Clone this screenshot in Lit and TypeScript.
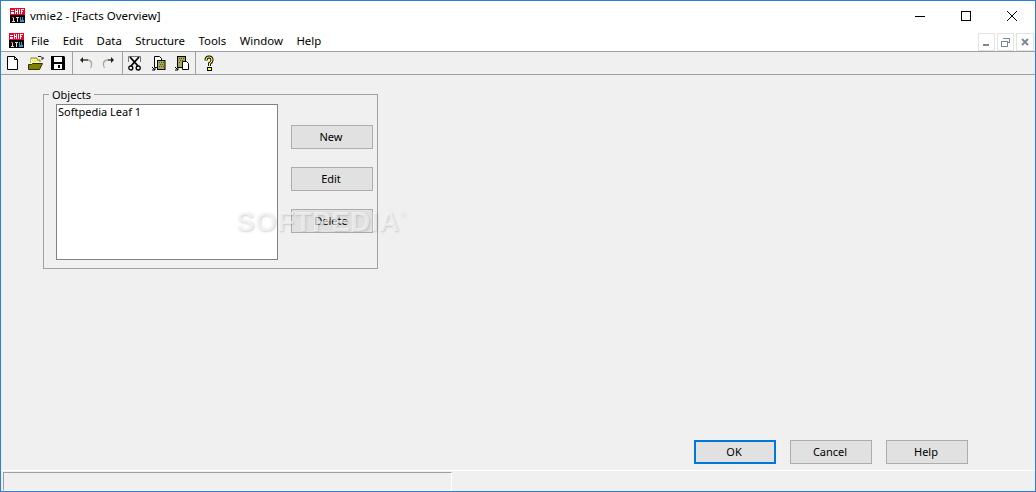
import { LitElement, html, css, svg } from "lit";
import { customElement } from "lit/decorators.js";

const appIcon = html`<svg class="appicon" width="15" height="15" viewBox="0 0 15 15" shape-rendering="crispEdges">
  <rect x="0" y="0" width="15" height="7" fill="#ee0028"/>
  <path d="M1 2h3v1H1zM1 4h3v2H1zM5 1h1v5H5zM7 1h1v5H7zM6 3h1v1H6zM9 1h1v5H9zM11 1h3v1h-3zM11 1h1v5h-1zM11 3h2v1h-2z" fill="#fff"/>
  <rect x="0" y="7" width="15" height="8" fill="#000"/>
  <path d="M2 13h1v-3h1v3h1v1H2zM6 9h3v1H8v4H7v-4H6z" fill="#ddd"/>
  <path d="M10 9h1v3h1V9h1v3h1v2h-4z" fill="#39c"/>
  <path d="M2 9h2v1H2z" fill="#e44"/>
</svg>`;

const icons = {
  doc: svg`<path d="M1.500 .5h7l3 3v10h-10z" fill="#fff" stroke="#000"/><path d="M8.500 .5v3h3" fill="none" stroke="#000"/>`,
  open: svg`<path d="M3 7V2h6v2h3v2" fill="#ffff80" stroke="#808000"/><path d="M3 3h6v4H3z" fill="#ffff90"/><path d="M4 4h1v1H4zM6 4h1v1H6zM8 4h1v1H8zM5 5h1v1H5zM7 5h1v1H7z" fill="#d8d8a0"/><path d="M.5 13.500v-5h3l1-1h10l-3 6z" fill="#808000" stroke="#303000"/><path d="M10 .5h3l2 2M15 1v2h-2" fill="none" stroke="#222"/>`,
  save: svg`<path d="M0 0h13l1 1v13H0z" fill="#000"/><rect x="3" y="1" width="8" height="5" fill="#fff"/><rect x="3" y="8" width="8" height="5" fill="#fff"/><rect x="7" y="9" width="2" height="3" fill="#000"/>`,
  undo: svg`<path d="M3 4h6q3 .5 3.500 3t-1 5" fill="none" stroke="#a8a890" stroke-width="1.300"/><path d="M4 1v6L1 4z" fill="#222"/><path d="M9 4H4" stroke="#222"/>`,
  redo: svg`<path d="M10 4H5Q2 4.500 1.500 7t1 5" fill="none" stroke="#a8a890" stroke-width="1.300"/><path d="M9 1v6l3-3z" fill="#222"/><path d="M9 4H6" stroke="#222"/>`,
  cut: svg`<path d="M.5 6V.5h12V6" fill="#f4f4f4" stroke="#777"/><path d="M2 1l8 9M11 1L3 10" stroke="#000" stroke-width="1.800" fill="none"/><circle cx="2.800" cy="12" r="2" fill="none" stroke="#000" stroke-width="1.300"/><circle cx="10.200" cy="12" r="2" fill="none" stroke="#000" stroke-width="1.300"/>`,
  copy: svg`<path d="M2.500 .5h5l2 2v2h-4v7h-3z" fill="#fff" stroke="#000"/><rect x="5.500" y="4.500" width="7.500" height="9" fill="#a8a850" stroke="#000"/><path d="M7 6h1v1H7zM9 6h1v1H9zM11 6h1v1h-1zM8 8h1v1H8zM10 8h1v1h-1zM7 10h1v1H7zM9 10h1v1H9zM11 10h1v1h-1z" fill="#5a5a20"/><path d="M0 11l3 3M0 14h3v-2" fill="none" stroke="#000"/>`,
  paste: svg`<rect x="2.500" y=".5" width="8" height="11" fill="#a8a850" stroke="#000"/><path d="M4 2h1v1H4zM6 2h1v1H6zM8 2h1v1H8zM5 4h1v1H5zM7 4h1v1H7zM4 6h1v1H4z" fill="#5a5a20"/><path d="M7.500 5.500h4l2 2v6h-6z" fill="#fff" stroke="#000"/><path d="M0 11l3 3M0 14h3v-2" fill="none" stroke="#000"/>`,
  help: svg`<path d="M2 4.500Q2 1 5 1T8 4q0 2-2.500 3.500V10" fill="none" stroke="#000" stroke-width="3"/><path d="M2 4.500Q2 1 5 1T8 4q0 2-2.500 3.500V10" fill="none" stroke="#ffff40" stroke-width="1.200"/><rect x="3.500" y="11.500" width="4" height="3" fill="#ffff40" stroke="#000"/>`,
};

const tb = (name: keyof typeof icons, w: number) =>
  html`<svg class="tbicon" width=${w} height="15" viewBox="0 0 ${w} 15">${icons[name]}</svg>`;

@customElement("app-root")
export class AppRoot extends LitElement {
  static styles = css`
    :host {
      display: flex;
      flex-direction: column;
      box-sizing: border-box;
      width: 1036px;
      height: 492px;
      position: relative;
      overflow: hidden;
      background: #f0f0f0;
      border: 1px solid #2b80d6;
      font-family: "Noto Sans", sans-serif;
      font-size: 11px;
      color: #000;
    }
    .title {
      height: 29px;
      flex: none;
      background: #fff;
      display: flex;
      align-items: center;
      padding-left: 9px;
      gap: 5px;
      font-size: 11.500px;
    }
    .title .name { margin-top: -1px; }
    .caption { margin-left: auto; display: flex; }
    .cap {
      width: 46px;
      height: 29px;
      display: flex;
      align-items: center;
      justify-content: center;
    }
    .menubar {
      height: 21px;
      flex: none;
      background: #fff;
      display: flex;
      align-items: center;
      padding-left: 8px;
    }
    .menus { display: flex; gap: 13.500px; margin-left: 7px; font-size: 11.400px; }
    .mdi { margin-left: auto; margin-right: 1px; display: flex; gap: 2px; align-self: flex-end; }
    .mdibtn {
      width: 17px;
      height: 18px;
      box-sizing: border-box;
      border: 1px solid #e3e3e3;
      display: flex;
      align-items: center;
      justify-content: center;
    }
    .mdibtn.last { width: 18px; }
    .toolbar {
      height: 22px;
      flex: none;
      display: flex;
      align-items: center;
      padding-left: 5px;
      border-top: 1px solid #a0a0a0;
      border-bottom: 1px solid #a0a0a0;
      box-sizing: content-box;
    }
    .tbicon { flex: none; display: block; overflow: visible; }
    .sep { width: 1px; height: 22px; background: #a0a0a0; flex: none; }
    .content { flex: 1; display: flex; flex-direction: column; min-height: 0; }
    fieldset {
      box-sizing: border-box;
      width: 335px;
      height: 182px;
      margin: 12px 0 0 42px;
      padding: 3px 4px 0 12px;
      border: 1px solid #a0a0a0;
      display: flex;
      gap: 13px;
      min-inline-size: 0;
    }
    legend {
      padding: 0 3px;
      margin-left: -7px;
      height: 14px;
      line-height: 16px;
    }
    .list {
      box-sizing: border-box;
      width: 222px;
      height: 156px;
      background: #fff;
      border: 1px solid #828282;
      padding: 0 1px;
      line-height: 14px;
    }
    .side { display: flex; flex-direction: column; gap: 18px; padding-top: 21px; }
    button {
      box-sizing: border-box;
      width: 82px;
      height: 24px;
      padding: 0 2px 2px 0;
      background: #e1e1e1;
      border: 1px solid #adadad;
      font: inherit;
      color: #000;
    }
    button.def { border: 2px solid #0078d7; }
    .actions {
      margin-top: auto;
      margin-bottom: 6px;
      display: flex;
      gap: 14px;
      justify-content: flex-end;
      padding-right: 67px;
    }
    .status {
      height: 21px;
      flex: none;
      box-sizing: border-box;
      border-top: 1px solid #fff;
      padding: 1px 0 0 2px;
    }
    .panel {
      box-sizing: border-box;
      width: 449px;
      height: 19px;
      border-style: solid;
      border-width: 1px;
      border-color: #a0a0a0 #fff #fff #a0a0a0;
    }
    .wm {
      position: absolute;
      left: 235px;
      top: 204px;
      font-family: "Liberation Sans", sans-serif;
      font-weight: 700;
      font-size: 27.500px;
      line-height: 34px;
      letter-spacing: 0.7px;
      color: rgba(255, 255, 255, 0.6);
      text-shadow: 1px 1px 2px rgba(120, 120, 120, 0.3);
      pointer-events: none;
    }
    .wm sup { font-size: 8px; font-weight: 400; vertical-align: 14px; line-height: 0; }
    .g5 { width: 5px; flex: none; } .g6 { width: 6px; flex: none; }
    .g7 { width: 7px; flex: none; } .g8 { width: 8px; flex: none; }
    .g9 { width: 9px; flex: none; } .g10 { width: 10px; flex: none; }
    .g11 { width: 11px; flex: none; }
  `;

  render() {
    return html`
      <div class="title">
        ${appIcon}
        <span class="name">vmie2 - [Facts Overview]</span>
        <div class="caption">
          <div class="cap"><svg width="10" height="10" viewBox="0 0 10 10"><path d="M0 5.500h10" stroke="#000" fill="none"/></svg></div>
          <div class="cap"><svg width="10" height="10" viewBox="0 0 10 10"><rect x=".5" y=".5" width="9" height="9" stroke="#000" fill="none"/></svg></div>
          <div class="cap"><svg width="10" height="10" viewBox="0 0 10 10"><path d="M0 0l10 10M10 0L0 10" stroke="#000" fill="none"/></svg></div>
        </div>
      </div>
      <div class="menubar">
        ${appIcon}
        <div class="menus">
          <span>File</span><span>Edit</span><span>Data</span><span>Structure</span><span>Tools</span><span>Window</span><span>Help</span>
        </div>
        <div class="mdi">
          <div class="mdibtn"><svg width="7" height="7" viewBox="0 0 7 7" shape-rendering="crispEdges"><rect x="0" y="5" width="6" height="2" fill="#7a8a99"/></svg></div>
          <div class="mdibtn"><svg width="9" height="9" viewBox="0 0 9 9" shape-rendering="crispEdges"><path d="M2.500 .5h6v4h-2M.5 3.500h6v5h-6z" stroke="#7a8a99" fill="none"/><path d="M2 0h7v1H2zM0 3h7v1H0z" fill="#7a8a99"/></svg></div>
          <div class="mdibtn last"><svg width="8" height="8" viewBox="0 0 8 8"><path d="M1 1l6 6M7 1L1 7" stroke="#7a8a99" stroke-width="2" fill="none"/></svg></div>
        </div>
      </div>
      <div class="toolbar">
        ${tb("doc", 13)}<span class="g9"></span>
        ${tb("open", 16)}<span class="g7"></span>
        ${tb("save", 15)}<span class="g6"></span>
        <div class="sep"></div><span class="g6"></span>
        ${tb("undo", 13)}<span class="g10"></span>
        ${tb("redo", 13)}<span class="g7"></span>
        <div class="sep"></div><span class="g5"></span>
        ${tb("cut", 13)}<span class="g11"></span>
        ${tb("copy", 14)}<span class="g9"></span>
        ${tb("paste", 14)}<span class="g6"></span>
        <div class="sep"></div><span class="g8"></span>
        ${tb("help", 11)}
      </div>
      <div class="content">
        <fieldset>
          <legend>Objects</legend>
          <div class="list">Softpedia Leaf 1</div>
          <div class="side">
            <button>New</button>
            <button>Edit</button>
            <button>Delete</button>
          </div>
        </fieldset>
        <div class="actions">
          <button class="def">OK</button>
          <button>Cancel</button>
          <button>Help</button>
        </div>
      </div>
      <div class="status"><div class="panel"></div></div>
      <div class="wm">SOFTPEDIA<sup>®</sup></div>
    `;
  }
}
